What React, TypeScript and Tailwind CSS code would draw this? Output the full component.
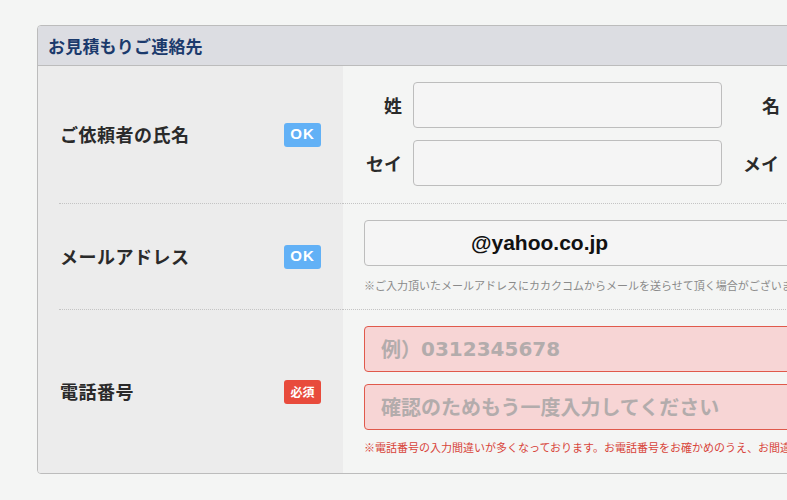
import React from "react";

const jp = { fontFamily: '"Noto Sans CJK JP", "Noto Sans", sans-serif' };

function Badge({ kind }: { kind: "ok" | "req" }) {
  if (kind === "ok") {
    return (
      <span
        className="flex h-[24px] w-[37px] items-center justify-center rounded-[3px] bg-[#62b1f6] text-[15px] font-bold tracking-[1px] text-white"
        style={{ fontFamily: '"Liberation Sans", Arial, sans-serif' }}
      >
        OK
      </span>
    );
  }
  return (
    <span className="flex h-[24px] w-[37px] items-center justify-center rounded-[3px] bg-[#e84b3c] text-[12px] font-bold text-white">
      必須
    </span>
  );
}

function LeftCell({ label, badge }: { label: string; badge: "ok" | "req" }) {
  return (
    <div className="flex w-[305px] shrink-0 items-center justify-between bg-[#ececec] pl-[22px] pr-[22px]">
      <span className="text-[18px] font-bold tracking-[0.5px] text-[#2a2a2a]">{label}</span>
      <Badge kind={badge} />
    </div>
  );
}

function Separator() {
  return (
    <div className="flex">
      <div className="h-px w-[21px] shrink-0 bg-[#ececec]" />
      <div className="w-[284px] shrink-0 border-t border-dotted border-[#c4c4c4] bg-[#ececec]" />
      <div className="flex-1 border-t border-dotted border-[#c4c4c4] bg-[#f4f5f4]" />
    </div>
  );
}

function NameInput({ value }: { value: string }) {
  return (
    <div className="flex h-[46px] w-[309px] shrink-0 items-center rounded-[4px] border border-[#bdbdbd] bg-[#f5f5f5] pl-[14px] text-[16px] text-[#222]">
      {value}
    </div>
  );
}

export default function App() {
  return (
    <div className="h-[500px] w-[787px] overflow-hidden bg-[#f4f5f4]" style={jp}>
      <div className="ml-[37px] mt-[25px] w-[900px] overflow-hidden rounded-[4px] border border-[#bcbcbc]">
        {/* Header */}
        <div className="flex h-[40px] items-center border-b border-[#bcbcbc] bg-[#dcdde2] pl-[10px]">
          <span className="text-[17px] font-bold tracking-[0.2px] text-[#1b3a6c]">お見積もりご連絡先</span>
        </div>

        {/* Row 1: name */}
        <div className="flex">
          <LeftCell label="ご依頼者の氏名" badge="ok" />
          <div className="flex flex-1 flex-col gap-[12px] bg-[#f4f5f4] pb-[17px] pl-[21px] pt-[16px]">
            <div className="flex items-center">
              <span className="w-[38px] text-right text-[18px] font-bold text-[#2a2a2a]">姓</span>
              <div className="ml-[11px]">
                <NameInput value="" />
              </div>
              <span className="ml-[40px] text-[18px] font-bold text-[#2a2a2a]">名</span>
            </div>
            <div className="flex items-center">
              <span className="w-[38px] text-right text-[18px] font-bold text-[#2a2a2a]">セイ</span>
              <div className="ml-[11px]">
                <NameInput value="" />
              </div>
              <span className="ml-[21px] text-[18px] font-bold text-[#2a2a2a]">メイ</span>
            </div>
          </div>
        </div>

        <Separator />

        {/* Row 2: email */}
        <div className="flex">
          <LeftCell label="メールアドレス" badge="ok" />
          <div className="flex flex-1 flex-col bg-[#f4f5f4] pb-[16px] pl-[21px] pt-[16px]">
            <div
              className="flex h-[46px] items-center rounded-[4px] border border-[#bdbdbd] bg-[#f5f5f5] pl-[106px] text-[21px] font-bold text-[#111]"
              style={{ fontFamily: '"Liberation Sans", Arial, sans-serif' }}
            >
              @yahoo.co.jp
            </div>
            <p className="mt-[11px] whitespace-nowrap text-[11px] leading-[16px] text-[#8a8a8a]">
              ※ご入力頂いたメールアドレスにカカクコムからメールを送らせて頂く場合がございます。
            </p>
          </div>
        </div>

        <Separator />

        {/* Row 3: phone */}
        <div className="flex">
          <LeftCell label="電話番号" badge="req" />
          <div className="flex flex-1 flex-col bg-[#f4f5f4] pb-[18px] pl-[21px] pt-[16px]">
            <div className="flex h-[46px] items-center rounded-[4px] border border-[#e0594b] bg-[#f7d5d5] pl-[16px] text-[20px] font-bold text-[#b3acac]">
              例）
              <span style={{ fontFamily: '"DejaVu Sans", sans-serif' }}>0312345678</span>
            </div>
            <div className="mt-[12px] flex h-[46px] items-center rounded-[4px] border border-[#e0594b] bg-[#f7d5d5] pl-[16px] text-[20px] font-bold text-[#b3acac]">
              確認のためもう一度入力してください
            </div>
            <p className="mt-[9px] whitespace-nowrap text-[11px] leading-[16px] text-[#d8443a]">
              ※電話番号の入力間違いが多くなっております。お電話番号をお確かめのうえ、お間違いのないようご入力ください。
            </p>
          </div>
        </div>
      </div>
    </div>
  );
}
